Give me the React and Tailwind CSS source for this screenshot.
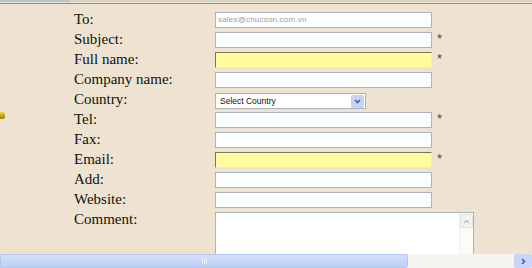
import React from 'react';

const sans = { fontFamily: '"Liberation Sans", Arial, sans-serif' };

const rows = [
  { label: 'To:', kind: 'input', value: 'sales@chucson.com.vn' },
  { label: 'Subject:', kind: 'input', req: true },
  { label: 'Full name:', kind: 'yellow', req: true },
  { label: 'Company name:', kind: 'input' },
  { label: 'Country:', kind: 'select' },
  { label: 'Tel:', kind: 'input', req: true },
  { label: 'Fax:', kind: 'input' },
  { label: 'Email:', kind: 'yellow', req: true },
  { label: 'Add:', kind: 'input' },
  { label: 'Website:', kind: 'input' },
];

function Field({ row }) {
  if (row.kind === 'select') {
    return (
      <div className="mt-[3px] flex h-[16px] w-[151px] items-center border border-[#a8b4c2] bg-white">
        <span className="flex-1 pl-[4px] text-[8.5px] leading-none text-[#111]" style={sans}>Select Country</span>
        <span className="mr-[1px] flex h-[13px] w-[13px] items-center justify-center rounded-[2px] bg-[#c4d4f7]">
          <svg width="7" height="5" viewBox="0 0 7 5">
            <path d="M1 1 L3.5 3.5 L6 1" stroke="#4d6185" strokeWidth="1.6" fill="none" />
          </svg>
        </span>
      </div>
    );
  }
  const yellow = row.kind === 'yellow';
  return (
    <div
      className={
        yellow
          ? 'mt-[2px] h-[16px] w-[217px] border border-t-[#7d7658] border-l-[#7d7658] border-r-[#efe9c4] border-b-[#efe9c4] bg-[#fffb9e]'
          : 'mt-[2px] flex h-[16px] w-[217px] items-center border border-[#a8b4c2] bg-[#fcfdff]'
      }
    >
      {row.value && (
        <span className="pl-[2px] text-[8px] leading-none tracking-[0.2px] text-[#a0a0a0]" style={sans}>{row.value}</span>
      )}
    </div>
  );
}

export default function App() {
  return (
    <div
      className="relative h-[268px] w-[532px] overflow-hidden bg-[#eee3d0]"
      style={{ fontFamily: '"Liberation Serif", "Times New Roman", serif' }}
    >
      {/* window edge */}
      <div className="flex h-[3px]">
        <div className="h-[2px] w-[70px] bg-[#b9c3cf]" />
        <div className="h-[2px] flex-1 bg-[#d6d2c6]" />
      </div>
      <div className="h-[1px] bg-[#8f8c82]" />

      {/* little bullet on the left edge */}
      <div className="absolute left-[-3px] top-[112px] h-[7px] w-[8px] rounded-[2px] bg-gradient-to-b from-[#f4d23c] to-[#9a7a10]" />

      <div className="pl-[74px] pt-[6px]">
        {rows.map((r) => (
          <div key={r.label} className="flex h-[20px]">
            <div className="w-[141px] text-[15px] leading-[18px] text-[#111]">{r.label}</div>
            <Field row={r} />
            {r.req && <span className="ml-[5px] mt-[2px] text-[13px] leading-[14px] text-[#444]" style={sans}>*</span>}
          </div>
        ))}
        <div className="flex h-[45px]">
          <div className="w-[141px] text-[15px] leading-[18px] text-[#111]">Comment:</div>
          <div className="mt-[2px] flex h-[60px] w-[259px] border border-[#a8b4c2] bg-white">
            <div className="flex-1" />
            <div className="w-[14px] border-l border-[#eeeeea] bg-[#fbfbf8]">
              <div className="mt-[1px] flex h-[14px] w-[13px] items-center justify-center rounded-[2px] border border-[#e4e4dc] bg-[#f4f4ef]">
                <svg width="7" height="5" viewBox="0 0 7 5">
                  <path d="M1 4 L3.5 1.5 L6 4" stroke="#b9bcc4" strokeWidth="1.3" fill="none" />
                </svg>
              </div>
            </div>
          </div>
        </div>
      </div>

      {/* horizontal scrollbar */}
      <div className="absolute bottom-0 left-0 flex h-[14px] w-[532px] bg-[#f6f5f0]">
        <div className="flex h-[14px] w-[408px] items-center justify-center rounded-r-[2px] border border-[#b4c8f2] bg-gradient-to-b from-[#d3dffb] to-[#bccff7]">
          <div className="flex gap-[1px]">
            <div className="h-[6px] w-[1px] bg-[#eef3ff]" />
            <div className="h-[6px] w-[1px] bg-[#eef3ff]" />
            <div className="h-[6px] w-[1px] bg-[#eef3ff]" />
          </div>
        </div>
        <div className="flex-1" />
        <div className="flex h-[14px] w-[18px] items-center justify-center rounded-[2px] bg-[#c7d6f8]">
          <svg width="5" height="7" viewBox="0 0 5 7">
            <path d="M1 1 L3.5 3.5 L1 6" stroke="#4d6185" strokeWidth="1.6" fill="none" />
          </svg>
        </div>
      </div>
    </div>
  );
}
